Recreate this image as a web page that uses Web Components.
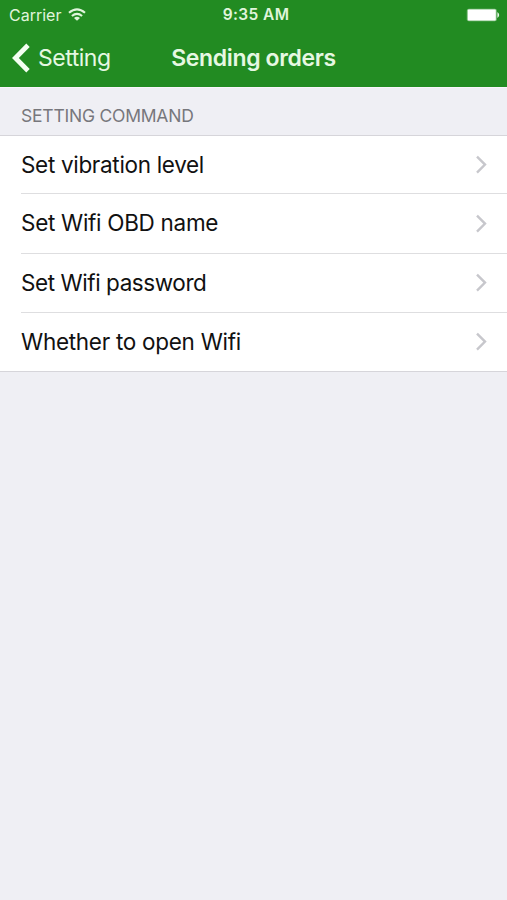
<!DOCTYPE html>
<html lang="en"><head><meta charset="utf-8"><title>Sending orders</title>
<style>html,body{margin:0;height:100%}body{background:#efeff4;font-family:Inter,"Liberation Sans",sans-serif;overflow:hidden}</style></head>
<body>
<app-screen>
<status-bar slot="top"></status-bar>
<nav-bar slot="top" back="Setting">Sending orders</nav-bar>
<list-group heading="SETTING COMMAND">
<list-row style="letter-spacing:-.32px">Set vibration level</list-row>
<list-row style="letter-spacing:-.3px">Set Wifi OBD name</list-row>
<list-row style="letter-spacing:-.43px">Set Wifi password</list-row>
<list-row style="letter-spacing:-.28px">Whether to open Wifi</list-row>
</list-group>
</app-screen>
<script>
const define = (name, html) => customElements.define(name, class extends HTMLElement {
  constructor() {
    super();
    const t = document.createElement('template');
    t.innerHTML = html;
    this.attachShadow({mode: 'open'}).append(t.content.cloneNode(true));
    for (const n of this.shadowRoot.querySelectorAll('[data-attr]')) n.textContent = this.getAttribute(n.dataset.attr);
  }
});
define('app-screen', `<style>:host{display:block;width:507px;height:900px;background:#efeff4}header{background:#228b22;color:#fff;height:87px}main{border-top:1px solid #f8f6fb}</style><header><slot name="top"></slot></header><main><slot></slot></main>`);
define('status-bar', `<style>:host{display:grid;grid-template-columns:1fr auto 1fr;align-items:center;height:30px;padding:0 7px 0 9px;box-sizing:border-box;font-size:16px;line-height:30px;color:#e0f5dc}.l{display:flex;align-items:center;gap:7px}.time{font-weight:600;font-size:15.5px;letter-spacing:.4px;padding-left:3px}.b{justify-self:end;display:block}</style>
<div class="l"><span>Carrier</span><svg width="18" height="14" viewBox="0 0 18 14" fill="none" stroke="currentColor" stroke-width="2.1"><path d="M1 4.8Q9-2.1 17 4.8M3.9 8Q9 3.6 14.1 8"/><path d="M6 9.9Q9 7.8 12 9.9L9 12.8Z" fill="currentColor" stroke="none"/></svg></div><span class="time">9:35 AM</span>
<svg class="b" width="34" height="14" viewBox="0 0 34 14"><rect x=".8" y=".8" width="30" height="12.4" rx="2" fill="#7fbd7f"/><rect x="1.8" y="1.6" width="28" height="10.8" rx="1" fill="#fff"/><path d="M31.4 4.1q3.6 2.9 0 5.8z" fill="#e9f6e9"/></svg>`);
define('nav-bar', `<style>:host{display:grid;grid-template-columns:1fr auto 1fr;height:57px;padding:0 12px;font-size:23px;line-height:56px;color:#e6f8e2}.back{display:flex;align-items:center;gap:7px;height:55px;line-height:55px;letter-spacing:-.48px}.back span{padding-top:2px}.title{font-weight:600;letter-spacing:-.37px}</style>
<div class="back"><svg width="19" height="30" viewBox="0 0 19 30" fill="none" stroke="#f4fff2" stroke-width="4.8"><path d="M16 2.2L3.4 15L16 27.8"/></svg><span data-attr="back"></span></div><span class="title"><slot></slot></span>`);
define('list-group', `<style>:host{display:block}h2{margin:0;box-sizing:border-box;height:48px;padding:0 21px;font-size:17.5px;font-weight:400;line-height:55px;letter-spacing:-.22px;color:#77777c;border-bottom:1px solid #d6d5da}section{background:#fff;border-bottom:1px solid #d6d5da}</style><h2 data-attr="heading"></h2><section><slot></slot></section>`);
define('list-row', `<style>:host{display:flex;align-items:center;justify-content:space-between;height:58.3px;margin-left:21px;padding-right:20px;border-bottom:1px solid #dedee0;font-size:22.5px;color:#111}:host(:first-child){height:57.4px}:host(:last-child){border-bottom:0;height:58px}span{padding-bottom:1.4px}</style><span><slot></slot></span><svg width="11" height="20" viewBox="0 0 11 20" fill="none" stroke="#c7c7cc" stroke-width="2.4"><path d="M1 1.6L9 9.6L1 17.6"/></svg>`);
</script></body></html>
